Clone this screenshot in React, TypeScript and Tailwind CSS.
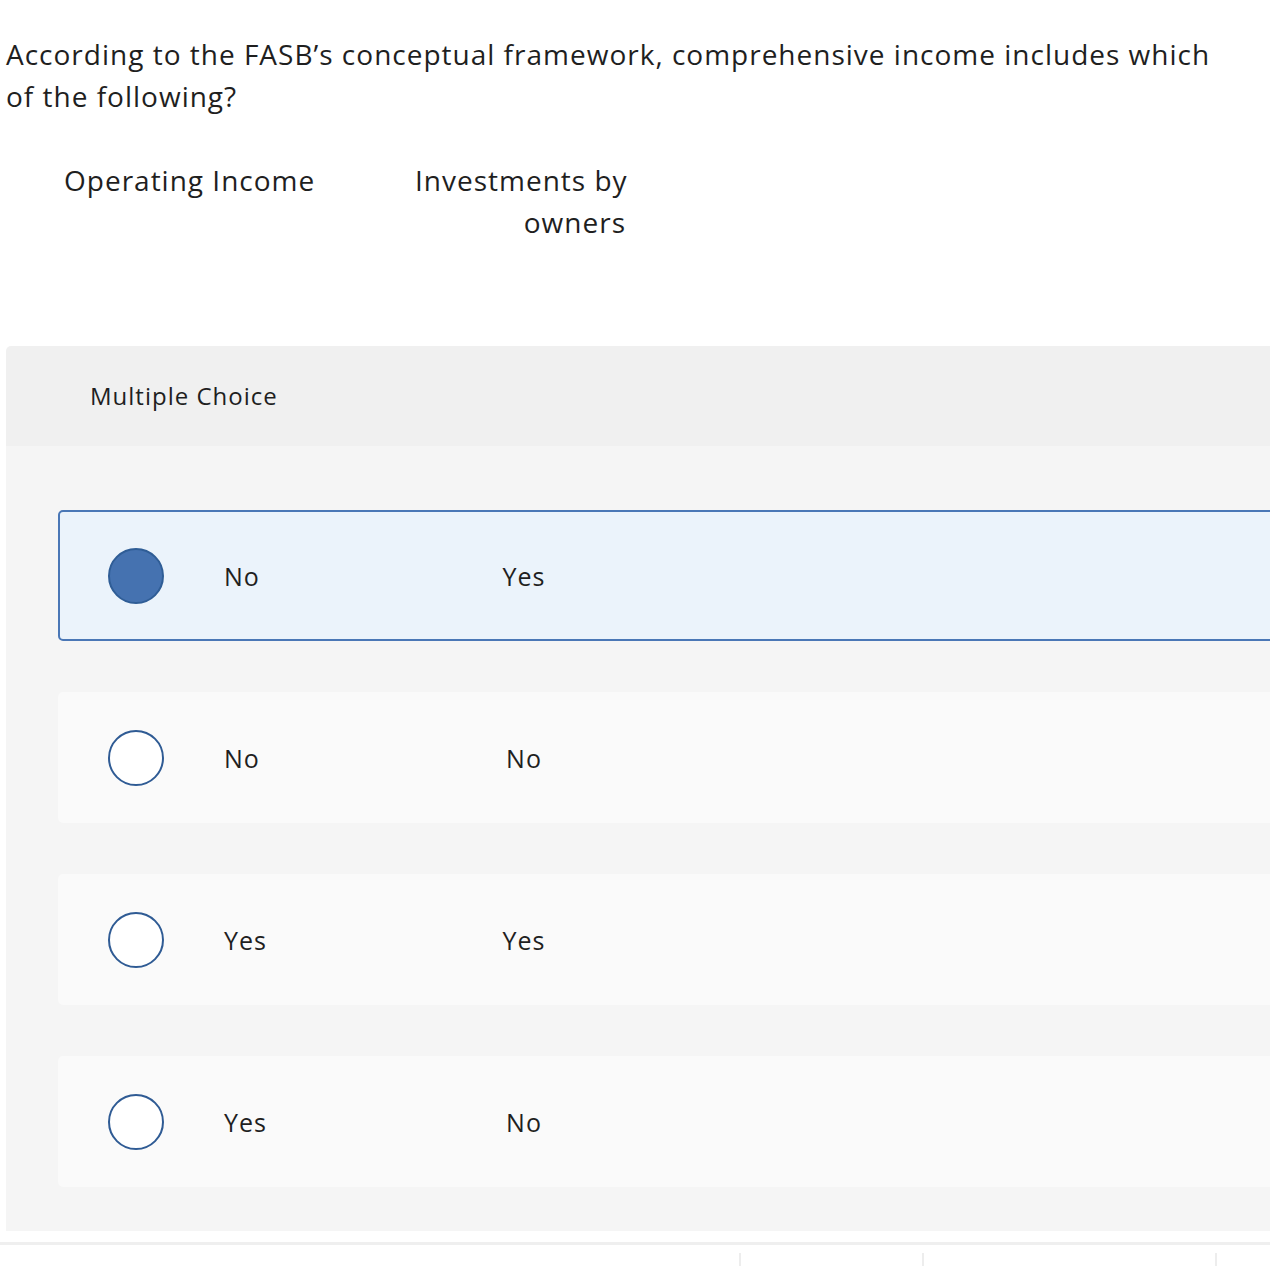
import React from "react";

const rows = [
  { a: "No", b: "Yes", selected: true },
  { a: "No", b: "No", selected: false },
  { a: "Yes", b: "Yes", selected: false },
  { a: "Yes", b: "No", selected: false },
];

export default function App() {
  return (
    <div className="relative w-[1270px] h-[1266px] overflow-hidden bg-white text-[#1f1f1f] font-['Open_Sans',sans-serif] tracking-[1px]">
      <div className="pt-[33px] pl-[6px] text-[28px] leading-[42px] whitespace-nowrap">
        According to the FASB’s conceptual framework, comprehensive income includes which
        <br />
        of the following?
      </div>

      <div className="mt-[42px] flex pl-[64px] text-[28px] leading-[42px]">
        <div className="w-[351px] whitespace-nowrap">Operating Income</div>
        <div className="w-[211px] text-right whitespace-nowrap">
          Investments by
          <br />
          owners
        </div>
      </div>

      <div className="mt-[103px] ml-[6px] w-[1300px] rounded-t-[5px] overflow-hidden">
        <div className="h-[100px] bg-[#f0f0f0] flex items-center pl-[84px] text-[24px]">
          Multiple Choice
        </div>
        <div className="bg-[#f5f5f5] pt-[64px] pb-[44px] pl-[52px] flex flex-col gap-[51px]">
          {rows.map((r, i) => (
            <div
              key={i}
              className={
                r.selected
                  ? "h-[131px] rounded-[5px] border-2 border-[#4a77b6] bg-[#ebf3fb] flex items-center pl-[48px]"
                  : "h-[131px] rounded-[5px] border-2 border-transparent bg-[#fafafa] flex items-center pl-[48px]"
              }
            >
              <div
                className={
                  r.selected
                    ? "w-[56px] h-[56px] rounded-full border-2 border-[#2f5d96] bg-[#4572b0] shrink-0"
                    : "w-[56px] h-[56px] rounded-full border-2 border-[#2f5b94] bg-white shrink-0"
                }
              />
              <div className="ml-[60px] w-[230px] text-[25px] leading-[36px]">{r.a}</div>
              <div className="w-[140px] text-center text-[25px] leading-[36px]">{r.b}</div>
            </div>
          ))}
        </div>
      </div>

      <div className="mt-[11px] h-[3px] bg-[#efefef]" />
      <div className="relative h-[22px]">
        <div className="absolute left-[739px] top-[8px] w-[2px] h-[14px] bg-[#ededed]" />
        <div className="absolute left-[922px] top-[8px] w-[2px] h-[14px] bg-[#ededed]" />
        <div className="absolute left-[1215px] top-[8px] w-[2px] h-[14px] bg-[#ededed]" />
      </div>
    </div>
  );
}
